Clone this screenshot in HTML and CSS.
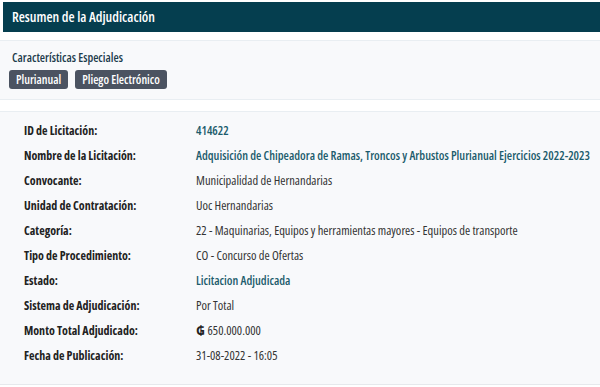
FILE: index.html
```html
<!DOCTYPE html>
<html lang="es">

<head>
    <meta charset="UTF-8">
    <meta name="viewport" content="width=device-width, initial-scale=1.0">
    <title>Resumen de la Adjudicación</title>
    <link rel="stylesheet" href="styles.css">
</head>

<body>
    <div class="card-header">Resumen de la Adjudicación</div>

    <div class="features">
        <h2>Características Especiales</h2>
        <div class="badges">
            <span class="badge">Plurianual</span>
            <span class="badge">Pliego Electrónico</span>
        </div>
    </div>

    <div class="details">
        <div class="row">
            <div class="label">ID de Licitación:</div>
            <div class="value link">414622</div>
        </div>
        <div class="row">
            <div class="label">Nombre de la Licitación:</div>
            <div class="value link">Adquisición de Chipeadora de Ramas, Troncos y Arbustos Plurianual Ejercicios 2022-2023</div>
        </div>
        <div class="row">
            <div class="label">Convocante:</div>
            <div class="value">Municipalidad de Hernandarias</div>
        </div>
        <div class="row">
            <div class="label">Unidad de Contratación:</div>
            <div class="value">Uoc Hernandarias</div>
        </div>
        <div class="row">
            <div class="label">Categoría:</div>
            <div class="value">22 - Maquinarias, Equipos y herramientas mayores - Equipos de transporte</div>
        </div>
        <div class="row">
            <div class="label">Tipo de Procedimiento:</div>
            <div class="value">CO - Concurso de Ofertas</div>
        </div>
        <div class="row">
            <div class="label">Estado:</div>
            <div class="value link">Licitacion Adjudicada</div>
        </div>
        <div class="row">
            <div class="label">Sistema de Adjudicación:</div>
            <div class="value">Por Total</div>
        </div>
        <div class="row">
            <div class="label">Monto Total Adjudicado:</div>
            <div class="value"><span class="currency">₲</span> 650.000.000</div>
        </div>
        <div class="row">
            <div class="label">Fecha de Publicación:</div>
            <div class="value">31-08-2022 - 16:05</div>
        </div>
    </div>
</body>

</html>
```

FILE: styles.css
```css
body {
    font-family: "Open Sans", "Noto Sans", sans-serif;
    font-stretch: 87.5%;
    background-color: #fff;
    margin: 0;
    color: #333;
}

.card-header {
    margin: 2px 0 0 3px;
    height: 30px;
    line-height: 30px;
    padding-left: 9px;
    background-color: #053e4f;
    color: #fff;
    font-size: 14px;
    font-weight: 600;
}

.features {
    margin-top: 8px;
    height: 60px;
    box-sizing: border-box;
    padding: 8px 9px 0 9px;
    background-color: #f8f9fb;
    border-top: 1px solid #e9eef2;
    border-bottom: 1px solid #e9eef2;
}

.features h2 {
    margin: 0 0 4px 3px;
    font-size: 12px;
    font-weight: 600;
    color: #1d3c4c;
}

.badges {
    display: flex;
    gap: 7px;
}

.badge {
    height: 19px;
    line-height: 19px;
    padding: 0 7px;
    border-radius: 3px;
    background-color: #4b5361;
    color: #fff;
    font-size: 12px;
    font-weight: 600;
}

.details {
    margin-top: 11px;
    height: 274px;
    box-sizing: border-box;
    padding: 6px 0 0 24px;
    background-color: #f8f9fb;
    border-top: 1px solid #e9eef2;
    border-bottom: 1px solid #e6e9ec;
}

.row {
    display: flex;
    height: 25px;
    align-items: center;
    font-size: 12px;
}

.label {
    width: 172px;
    flex-shrink: 0;
    font-weight: 700;
    color: #222;
}

.value {
    white-space: nowrap;
    font-size: 12.5px;
}

.link {
    font-size: 12.2px;
    font-weight: 600;
    color: #1c5c6c;
}

.currency {
    font-weight: 700;
    color: #222;
}
```
